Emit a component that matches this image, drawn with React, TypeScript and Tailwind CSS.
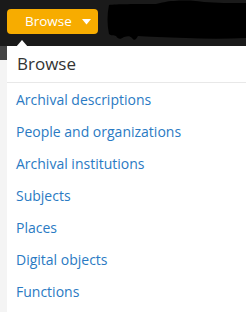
import React from "react";

const items = [
  "Archival descriptions",
  "People and organizations",
  "Archival institutions",
  "Subjects",
  "Places",
  "Digital objects",
  "Functions",
];

export default function App() {
  return (
    <div
      className="relative w-[246px] h-[312px] overflow-hidden bg-[#f4f4f4]"
      style={{ fontFamily: '"Open Sans", sans-serif' }}
    >
      <div className="h-[46px] bg-[#1a1a1a] flex items-start relative">
        <div className="ml-[7px] mt-[9px] h-[25px] w-[91px] rounded-[4px] bg-[#f7ac00] flex items-center pl-[18px] text-white text-[13.5px] leading-none">
          <span>Browse</span>
          <svg width="9" height="6" viewBox="0 0 9 6" className="ml-[10px]">
            <path d="M0 0 H9 L4.5 5.5 Z" fill="#fff" />
          </svg>
        </div>
        <svg
          width="140"
          height="44"
          viewBox="0 0 140 44"
          className="absolute left-[106px] top-0"
        >
          <path
            d="M3 5 C10 4 30 4 50 4 C56 3 60 1 68 1 C80 0 92 1 98 2 C110 3 125 3 140 3 L140 38 C120 39 100 39 80 38 C60 37 40 37 32 36 C30 40 28 41 26 38 C24 36 22 36 18 37 C14 40 12 39 10 36 C8 35 5 36 3 34 C1 25 1 14 3 5 Z"
            fill="#000"
          />
        </svg>
        <svg
          width="12"
          height="7"
          viewBox="0 0 12 7"
          className="absolute left-[16px] top-[40px]"
        >
          <path d="M0 7 L6 0 L12 7 Z" fill="#fff" />
        </svg>
      </div>
      <div className="absolute left-0 top-[46px] w-[7px] h-[14px] bg-[#444]" />
      <div className="absolute left-[7px] top-[46px] right-0 bottom-0 bg-white">
        <div className="h-[37px] border-b border-[#e8e8e8] pl-[10px] pt-[7px] text-[17px] leading-[22px] text-[#333]">
          Browse
        </div>
        <ul className="pt-0">
          {items.map((t) => (
            <li
              key={t}
              className="h-[32px] pl-[9px] flex items-center text-[14px] text-[#2a7ac3]"
            >
              {t}
            </li>
          ))}
        </ul>
      </div>
    </div>
  );
}
